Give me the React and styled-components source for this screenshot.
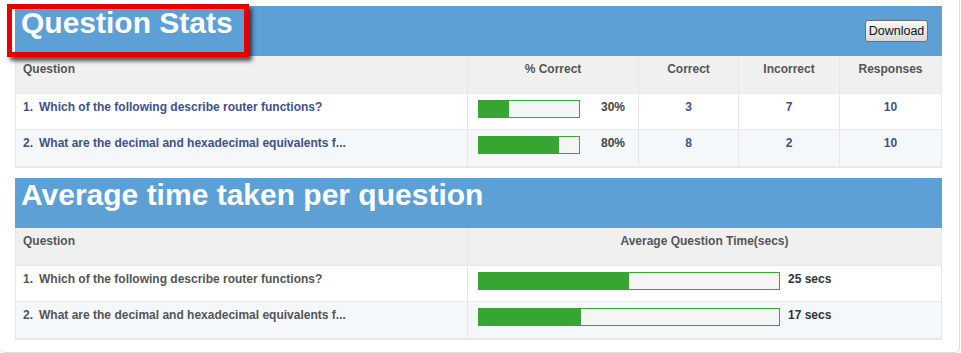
import React from 'react'
import { styled, createGlobalStyle } from 'styled-components'

const GlobalStyle = createGlobalStyle`
  body {
    margin: 0;
    background: #fff;
    font-family: "Liberation Sans", Arial, sans-serif;
  }
`;

const Page = styled.div`
  position: relative;
  box-sizing: border-box;
  width: 960px;
  height: 353px;
  padding: 6px 0 0 15px;
  border-right: 1px solid #dedede;
  border-bottom: 1px solid #dedede;
  border-bottom-right-radius: 5px;
  border-bottom-left-radius: 5px;
  overflow: hidden;
`;

const Section = styled.section`
  width: 927px;
  margin-bottom: 10px;
`;

const Band = styled.div`
  display: flex;
  align-items: center;
  height: 50px;
  background: #5ca0d5;
`;

const Title = styled.h2`
  align-self: flex-start;
  margin: 0;
  padding-left: 6px;
  font-size: 30px;
  line-height: 34px;
  font-weight: bold;
  color: #fff;
`;

const DownloadButton = styled.button`
  margin-left: auto;
  margin-right: 14px;
  box-sizing: border-box;
  width: 63px;
  height: 22px;
  padding: 0;
  font-family: "Liberation Sans", Arial, sans-serif;
  font-size: 12.5px;
  color: #111;
  background: linear-gradient(#f8f8f8, #dadada);
  border: 1px solid #6f6f6f;
  border-radius: 3px;
`;

const Table = styled.div`
  border: 1px solid #e8e8e8;
  border-top: none;
  border-bottom-width: 2px;
`;

const Row = styled.div`
  display: grid;
  grid-template-columns: ${p => p.$cols};
  height: ${p => (p.$head ? '38px' : '36px')};
  box-sizing: border-box;
  border-bottom: 1px solid #e8e8e8;
  background: ${p => (p.$head ? '#f0f0f0' : p.$alt ? '#f4f8fb' : '#fff')};
  &:last-child {
    border-bottom: none;
  }
`;

const Cell = styled.div`
  box-sizing: border-box;
  padding: 6px 7px 0;
  font-size: 12px;
  line-height: 14px;
  font-weight: bold;
  color: ${p => p.$color || '#555'};
  text-align: ${p => (p.$center ? 'center' : 'left')};
  white-space: nowrap;
  & + & {
    border-left: 1px solid #e6e6e6;
  }
`;

const BarCell = styled(Cell)`
  display: flex;
  align-items: flex-start;
  justify-content: ${p => (p.$spread ? 'space-between' : 'flex-start')};
  gap: 8px;
  padding: 6px 13px 0 10px;
`;

const Num = styled.span`
  margin-right: 6px;
`;

const Bar = styled.div`
  box-sizing: border-box;
  width: ${p => p.$width}px;
  height: 18px;
  flex: none;
  border: 1px solid #38a534;
  background: #f5f5f5;
`;

const BarFill = styled.div`
  height: 100%;
  background: #36a531;
`;

const Annotation = styled.div`
  position: absolute;
  left: 7px;
  top: 4px;
  box-sizing: border-box;
  width: 242px;
  height: 53px;
  border: 5px solid #e80000;
  box-shadow: 3px 4px 4px rgba(0, 0, 0, 0.65);
  pointer-events: none;
`;

const questions = [
  {
    n: 1,
    text: 'Which of the following describe router functions?',
    pct: 30,
    correct: 3,
    incorrect: 7,
    responses: 10,
    secs: 25,
  },
  {
    n: 2,
    text: 'What are the decimal and hexadecimal equivalents f...',
    pct: 80,
    correct: 8,
    incorrect: 2,
    responses: 10,
    secs: 17,
  },
];

const STATS_COLS = '451px 171px 100px 101px 1fr';
const TIME_COLS = '451px 1fr';
const LINK = '#42508a';
const MAX_SECS = 50;

function App() {
  return (
    <Page>
      <GlobalStyle />
      <Section>
        <Band>
          <Title>Question Stats</Title>
          <DownloadButton>Download</DownloadButton>
        </Band>
        <Table>
          <Row $head $cols={STATS_COLS}>
            <Cell>Question</Cell>
            <Cell $center>% Correct</Cell>
            <Cell $center>Correct</Cell>
            <Cell $center>Incorrect</Cell>
            <Cell $center>Responses</Cell>
          </Row>
          {questions.map((q, i) => (
            <Row key={q.n} $alt={i % 2 === 1} $cols={STATS_COLS}>
              <Cell $color={LINK}>
                <Num>{q.n}.</Num>
                {q.text}
              </Cell>
              <BarCell $spread $color="#444">
                <Bar $width={102}>
                  <BarFill style={{ width: `${q.pct}%` }} />
                </Bar>
                <span>{q.pct}%</span>
              </BarCell>
              <Cell $center $color={LINK}>{q.correct}</Cell>
              <Cell $center $color={LINK}>{q.incorrect}</Cell>
              <Cell $center $color={LINK}>{q.responses}</Cell>
            </Row>
          ))}
        </Table>
      </Section>

      <Section>
        <Band>
          <Title>Average time taken per question</Title>
        </Band>
        <Table>
          <Row $head $cols={TIME_COLS}>
            <Cell>Question</Cell>
            <Cell $center>Average Question Time(secs)</Cell>
          </Row>
          {questions.map((q, i) => (
            <Row key={q.n} $alt={i % 2 === 1} $cols={TIME_COLS}>
              <Cell>
                <Num>{q.n}.</Num>
                {q.text}
              </Cell>
              <BarCell $color="#333">
                <Bar $width={302}>
                  <BarFill style={{ width: `${(q.secs / MAX_SECS) * 100}%` }} />
                </Bar>
                <span>{q.secs} secs</span>
              </BarCell>
            </Row>
          ))}
        </Table>
      </Section>

      <Annotation />
    </Page>
  )
}

export default App
